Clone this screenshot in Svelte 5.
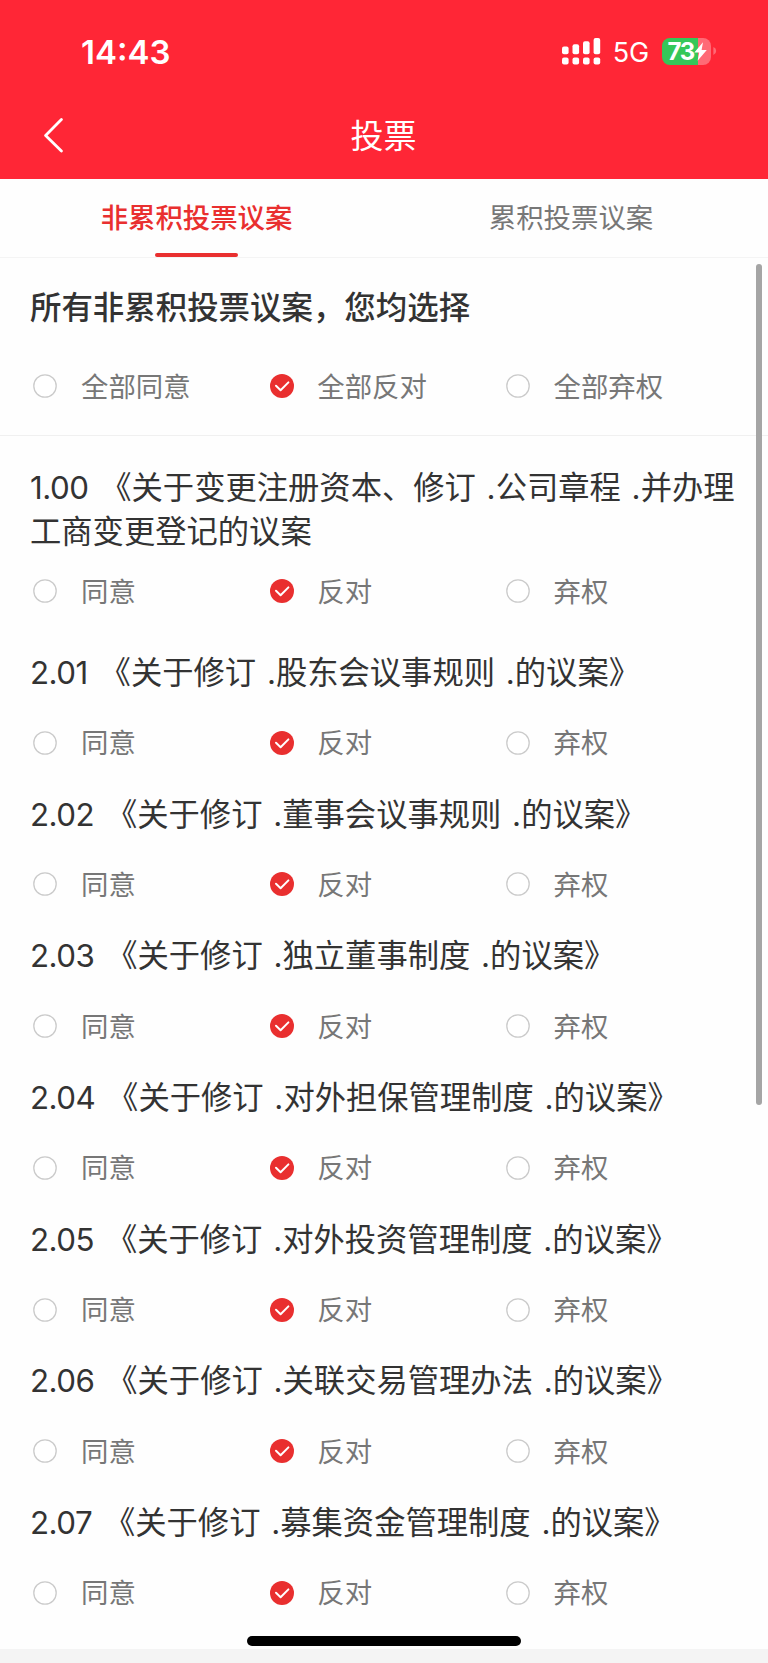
<script>
  const tabs = ['非累积投票议案', '累积投票议案'];
  let activeTab = $state(0);

  const choices = ['同意', '反对', '弃权'];
  let proposals = $state([
    { no: '1.00', title: '《关于变更注册资本、修订 .公司章程 .并办理工商变更登记的议案', vote: 1 },
    { no: '2.01', title: '《关于修订 .股东会议事规则 .的议案》', vote: 1 },
    { no: '2.02', title: '《关于修订 .董事会议事规则 .的议案》', vote: 1 },
    { no: '2.03', title: '《关于修订 .独立董事制度 .的议案》', vote: 1 },
    { no: '2.04', title: '《关于修订 .对外担保管理制度 .的议案》', vote: 1 },
    { no: '2.05', title: '《关于修订 .对外投资管理制度 .的议案》', vote: 1 },
    { no: '2.06', title: '《关于修订 .关联交易管理办法 .的议案》', vote: 1 },
    { no: '2.07', title: '《关于修订 .募集资金管理制度 .的议案》', vote: 1 }
  ]);
  let allVote = $state(1);

  function voteAll(i) {
    allVote = i;
    for (const p of proposals) p.vote = i;
  }
</script>

{#snippet options(prefix, selected, pick)}
  <div class="options">
    {#each choices as choice, i}
      <button class="option" onclick={() => pick(i)}>
        <svg class="radio" viewBox="0 0 24 24">
          {#if selected === i}
            <circle cx="12" cy="12" r="12" fill="#e92f2f" />
            <path d="M6 11.8 L10.6 16.2 L18.4 8.4" fill="none" stroke="#fff" stroke-width="2" stroke-linecap="round" stroke-linejoin="round" />
          {:else}
            <circle cx="12" cy="12" r="11.2" fill="#fff" stroke="#cbcbcb" stroke-width="1.3" />
          {/if}
        </svg>
        <span>{prefix}{choice}</span>
      </button>
    {/each}
  </div>
{/snippet}

<div class="screen">
  <header>
    <div class="status">
      <span class="time">14:43</span>
      <svg class="signal" width="39" height="27" viewBox="0 0 39 27" fill="#fff">
        <rect x="0" y="8.4" width="6.6" height="7.8" rx="2" />
        <rect x="10.5" y="6.2" width="6.6" height="10" rx="2" />
        <rect x="21" y="3.2" width="6.6" height="13" rx="2" />
        <rect x="31.6" y="0" width="6.6" height="16.2" rx="2" />
        <rect x="0" y="19.6" width="6.6" height="7" rx="2" />
        <rect x="10.5" y="19.6" width="6.6" height="7" rx="2" />
        <rect x="21" y="19.6" width="6.6" height="7" rx="2" />
        <rect x="31.6" y="19.6" width="6.6" height="7" rx="2" />
      </svg>
      <span class="network">5G</span>
      <div class="battery">
        <span class="level">73</span>
        <svg class="bolt" width="13" height="19" viewBox="0 0 13 19"><path d="M9 0.2 L0.3 10.6 H5.2 L3.6 18.8 L12.8 7.9 H7.6 Z" fill="#fff" /></svg>
      </div>
      <svg class="nub" width="4" height="8" viewBox="0 0 4 8"><path d="M0.4 0 Q3.2 1.2 3.2 4 T0.4 8 Z" fill="#ff6a76" /></svg>
    </div>
    <div class="nav">
      <svg class="back" width="22" height="36" viewBox="0 0 22 36"><path d="M19.4 1.6 L3.6 17.5 L19.4 33" fill="none" stroke="#fff" stroke-width="2.8" stroke-linecap="round" stroke-linejoin="round" /></svg>
      <h1>投票</h1>
    </div>
  </header>

  <nav class="tabs">
    {#each tabs as tab, i}
      <button class="tab" class:active={activeTab === i} onclick={() => (activeTab = i)}><span>{tab}</span></button>
    {/each}
  </nav>

  <main>
    <section class="summary">
      <h2>所有非累积投票议案，您均选择</h2>
      {@render options('全部', allVote, voteAll)}
    </section>

    <section class="list">
      {#each proposals as p, n}
        <article class:long={n === 0}>
          <p><span class="no">{p.no}</span>{p.title}</p>
          {@render options('', p.vote, (i) => (p.vote = i))}
        </article>
      {/each}
    </section>
  </main>

  <footer></footer>
  <div class="scrollbar"></div>
  <div class="home"></div>
</div>

<style>
  :global(body) { margin: 0; background: #fefefe; }
  .screen {
    position: relative;
    display: flex;
    flex-direction: column;
    width: 768px;
    height: 1663px;
    overflow: hidden;
    background: #fefefe;
    color: #333;
    font-family: Inter, "Noto Sans CJK SC", sans-serif;
  }
  button { border: 0; padding: 0; background: none; font: inherit; color: inherit; text-align: left; }
  h1, h2, p { margin: 0; font-weight: 400; }

  header { flex: none; height: 179.3px; background: #ff2636; color: #fff; }
  .status { display: flex; align-items: center; height: 102px; padding-left: 81px; box-sizing: border-box; }
  .time { width: 480.7px; font-size: 33px; font-weight: 600; line-height: 40px; margin-top: 2px; }
  .network { width: 49.3px; margin-left: 12px; font-size: 27px; line-height: 34px; margin-top: 3px; }
  .signal { flex: none; }
  .battery {
    display: flex;
    align-items: center;
    box-sizing: border-box;
    width: 49px;
    height: 27px;
    padding-left: 5.5px;
    border-radius: 8px;
    background: linear-gradient(90deg, #35c759 36px, #ff6a76 36px);
  }
  .level { width: 27px; font-size: 24px; font-weight: 700; line-height: 27px; letter-spacing: -1.4px; }
  .bolt { flex: none; }
  .nub { margin-left: 2px; }
  .nav { display: grid; grid-template-columns: 1fr auto 1fr; align-items: center; height: 67px; }
  .back { margin-left: 41.5px; }
  h1 { font-size: 33px; line-height: 48px; margin-left: -1px; }

  .tabs { flex: none; display: flex; height: 79px; border-bottom: 1px solid #f4f4f4; box-sizing: border-box; }
  .tab { display: flex; justify-content: center; flex: 0 0 393px; font-size: 27.4px; line-height: 40px; color: #777; padding-top: 19px; box-sizing: border-box; align-items: flex-start; }
  .tab + .tab { flex-basis: 356px; }
  .tab.active { color: #e92f2f; font-weight: 500; flex-direction: column; justify-content: space-between; align-items: center; }
  .tab.active::after { content: ""; width: 83px; height: 4px; border-radius: 2px; background: #e92f2f; }

  .summary { height: 178px; padding: 28px 30px 0; box-sizing: border-box; border-bottom: 1px solid #f0f0f0; }
  h2 { font-size: 31.45px; font-weight: 500; line-height: 44px; }
  .summary .options { margin-top: 37.6px; }

  .options { display: grid; grid-template-columns: repeat(3, 236.3px); height: 36px; }
  .option { display: flex; align-items: center; padding-left: 3.3px; font-size: 27.4px; line-height: 36px; color: #777; }
  .radio { flex: none; width: 24px; height: 24px; margin-right: 23.7px; }
  .option span { margin-top: 1px; }

  .list { padding: 30px 30px 0; }
  article { height: 141.7px; }
  article p { font-size: 31.3px; line-height: 44px; white-space: nowrap; word-spacing: 2px; }
  article .options { margin-top: 29.3px; }
  article.long { height: 184.7px; }
  article.long p { white-space: normal; word-break: break-all; margin-right: -8px; }
  article.long .options { margin-top: 18.5px; }
  .no { display: inline-block; margin-right: 11.8px; letter-spacing: -0.5px; }

  footer { position: absolute; left: 0; right: 0; bottom: 0; height: 14px; background: #f4f4f4; }
  .scrollbar { position: absolute; left: 756px; top: 264px; width: 6px; height: 841px; border-radius: 3px; background: #a5a5a5; }
  .home { position: absolute; left: 247px; top: 1636px; width: 274px; height: 10px; border-radius: 5px; background: #000; }
</style>
